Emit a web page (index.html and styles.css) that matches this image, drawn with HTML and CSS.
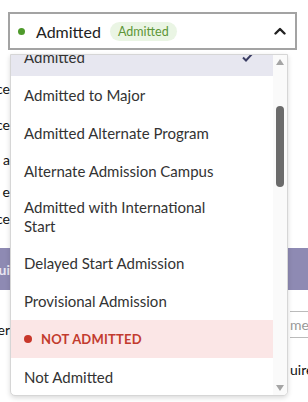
FILE: index.html
```html
<!DOCTYPE html>
<html lang="en">
<head>
<meta charset="UTF-8">
<title>Admission Decision</title>
<link rel="stylesheet" href="styles.css">
</head>
<body>
<div class="page">
  <!-- form behind the open menu -->
  <div class="backdrop">
    <div class="bg-row r1"><span class="bg-left">ce</span><span class="bg-right"></span></div>
    <div class="bg-row r2"><span class="bg-left">ce</span><span class="bg-right"></span></div>
    <div class="bg-row r3"><span class="bg-left">a</span><span class="bg-right"></span></div>
    <div class="bg-row r4"><span class="bg-left">e</span><span class="bg-right"></span></div>
    <div class="bg-row r5"><span class="bg-left">ce</span><span class="bg-right"></span></div>
    <div class="bg-bar"><span class="bg-left">ui</span><span class="bg-right"></span></div>
    <div class="bg-row r6"><span class="bg-left">er</span><span class="bg-input">me</span></div>
    <div class="bg-row r7"><span class="bg-left"></span><span class="bg-right">uire</span></div>
  </div>

  <div class="select">
    <span class="dot"></span>
    <span class="select-value">Admitted</span>
    <span class="badge">Admitted</span>
    <svg class="chevron" width="12" height="8" viewBox="0 0 12 8"><polyline points="1.5,6.5 6,2 10.5,6.5" fill="none" stroke="#222" stroke-width="2.4" stroke-linecap="round" stroke-linejoin="round"/></svg>
  </div>

  <div class="menu">
    <ul class="options">
      <li class="option selected"><span class="label">Admitted</span><span class="tick"><svg width="11" height="9" viewBox="0 0 11 9"><polyline points="1,4.5 4,7.5 10,1" fill="none" stroke="#3a3d63" stroke-width="2"/></svg></span></li>
      <li class="option"><span class="label">Admitted to Major</span><span class="tick"></span></li>
      <li class="option"><span class="label">Admitted Alternate Program</span><span class="tick"></span></li>
      <li class="option"><span class="label">Alternate Admission Campus</span><span class="tick"></span></li>
      <li class="option"><span class="label">Admitted with International Start</span><span class="tick"></span></li>
      <li class="option"><span class="label">Delayed Start Admission</span><span class="tick"></span></li>
      <li class="option"><span class="label">Provisional Admission</span><span class="tick"></span></li>
      <li class="group"><span class="group-dot"></span>NOT ADMITTED</li>
      <li class="option"><span class="label">Not Admitted</span><span class="tick"></span></li>
    </ul>
    <div class="scrollbar">
      <span class="arrow up"></span>
      <span class="thumb"></span>
      <span class="arrow down"></span>
    </div>
  </div>
</div>
</body>
</html>
```

FILE: styles.css
```css
body {
  margin: 0;
  font-family: Lato, "Open Sans", sans-serif;
  background: #fff;
  color: #222;
}
.page {
  position: relative;
  width: 308px;
  height: 402px;
  overflow: hidden;
}
.select {
  position: absolute;
  left: 8px;
  top: 12px;
  width: 277px;
  height: 34px;
  border: 2px solid #a3a3a3;
  background: #fff;
  display: flex;
  align-items: center;
  padding-left: 8px;
  box-sizing: content-box;
}
.dot {
  width: 7px;
  height: 7px;
  border-radius: 50%;
  background: #4e9a2b;
  margin-right: 11px;
}
.select-value {
  font-size: 16px;
  color: #222;
}
.badge {
  margin-left: 9px;
  background: #eaf5e4;
  color: #5d9637;
  font-size: 12.5px;
  padding: 2px 8px;
  border-radius: 10px;
}
.chevron {
  margin-left: auto;
  margin-right: 9px;
}

/* open menu */
.menu {
  position: absolute;
  left: 10px;
  top: 54px;
  width: 276px;
  height: 340px;
  border: 1px solid #d6d6d6;
  border-radius: 0 0 5px 5px;
  background: #fff;
  box-shadow: 0 2px 5px rgba(0,0,0,0.15);
  display: flex;
  overflow: hidden;
}
.options {
  list-style: none;
  margin: -17px 0 0 0;
  padding: 0;
  flex: 1;
}
.option {
  display: flex;
  align-items: center;
  min-height: 38px;
  padding: 8px 20px 8px 13px;
  box-sizing: border-box;
  font-size: 15px;
  line-height: 19px;
  color: #333;
}
.option .label {
  flex: 1;
  padding-right: 12px;
}
.tick {
  width: 11px;
  display: flex;
}
.selected {
  background: #e7e7f0;
}
.group {
  display: flex;
  align-items: center;
  height: 38px;
  padding-left: 13px;
  background: #fbe6e6;
  color: #c23b2e;
  font-size: 13px;
  font-weight: bold;
  letter-spacing: 0.2px;
}
.group-dot {
  width: 8px;
  height: 8px;
  border-radius: 50%;
  background: #c8372b;
  margin-right: 9px;
}
.scrollbar {
  width: 14px;
  background: #fafafa;
  display: flex;
  flex-direction: column;
  align-items: center;
}
.arrow {
  width: 0;
  height: 0;
  border-left: 4px solid transparent;
  border-right: 4px solid transparent;
}
.arrow.up {
  border-bottom: 6px solid #a5a5a5;
  margin-top: 4px;
}
.arrow.down {
  border-top: 6px solid #a5a5a5;
  margin-top: auto;
  margin-bottom: 4px;
}
.thumb {
  width: 8px;
  height: 81px;
  border-radius: 4px;
  background: #6b6b6b;
  margin-top: 41px;
}

/* background form, mostly hidden by the menu */
.backdrop {
  padding-top: 69px;
  font-size: 14px;
  color: #111;
}
.bg-row, .bg-bar {
  display: flex;
  justify-content: space-between;
  align-items: center;
}
.bg-left {
  width: 10px;
  display: flex;
  justify-content: flex-end;
  white-space: nowrap;
}
.bg-right {
  width: 18px;
  white-space: nowrap;
}
.r1 { height: 38px; }
.r2 { height: 35px; }
.r3 { height: 34px; }
.r4 { height: 30px; }
.r5 { height: 24px; margin-bottom: 18px; }
.bg-bar {
  height: 42px;
  background: #8e8ab3;
  color: #e8e6f2;
  font-weight: bold;
}
.r6 {
  height: 26px;
  margin-top: 22px;
  align-items: flex-end;
}
.bg-input {
  width: 18px;
  height: 25px;
  border-top: 1px solid #bbb;
  border-bottom: 1px solid #bbb;
  color: #999;
  white-space: nowrap;
  display: flex;
  align-items: center;
}
.r7 { height: 20px; margin-top: 21px; }
```
